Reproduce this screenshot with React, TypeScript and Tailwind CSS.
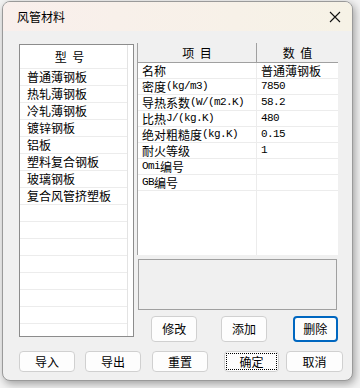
import React from "react";

const F = { fontFamily: '"Noto Sans CJK SC", "Noto Sans", sans-serif' };

function Mixed({ text }: { text: string }) {
  const parts = text.match(/[\x20-\x7e]+|[^\x20-\x7e]+/g) || [];
  return (
    <>
      {parts.map((p, i) =>
        /^[\x20-\x7e]+$/.test(p) ? (
          <span
            key={i}
            className="text-[11px] tracking-[-0.6px]"
            style={{ fontFamily: '"Liberation Mono", monospace' }}
          >
            {p}
          </span>
        ) : (
          <span key={i}>{p}</span>
        )
      )}
    </>
  );
}

const types = ["普通薄钢板", "热轧薄钢板", "冷轧薄钢板", "镀锌钢板", "铝板", "塑料复合钢板", "玻璃钢板", "复合风管挤塑板"];

const props: [string, string][] = [
  ["名称", "普通薄钢板"],
  ["密度(kg/m3)", "7850"],
  ["导热系数(W/(m2.K)", "58.2"],
  ["比热J/(kg.K)", "480"],
  ["绝对粗糙度(kg.K)", "0.15"],
  ["耐火等级", "1"],
  ["Omi编号", ""],
  ["GB编号", ""],
];

function Btn({ label, w, h, extra = "" }: { label: string; w: string; h: string; extra?: string }) {
  return (
    <div
      className={`${w} ${h} flex items-center justify-center rounded-[4px] bg-[#fdfdfd] text-[12px] text-black ${extra}`}
    >
      {label}
    </div>
  );
}

export default function App() {
  const emptyRows = Array.from({ length: 9 });
  return (
    <div className="w-[360px] h-[388px] bg-[#f3f3f3] relative overflow-hidden" style={F}>
      <div className="absolute left-[2px] top-[1px] w-[351px] h-[380px] rounded-[8px] border border-[#9a9a9a] bg-[#f0f0f0] shadow-[2px_3px_8px_rgba(0,0,0,0.35)] overflow-hidden flex flex-col">
        {/* title bar */}
        <div className="h-[29px] shrink-0 flex items-center justify-between bg-gradient-to-r from-[#f9efec] to-[#f6f2e6] pl-[14px] pr-[10px]">
          <span className="text-[12px] text-black">风管材料</span>
          <svg width="12" height="12" viewBox="0 0 12 12" className="mr-[1px]">
            <path d="M1 1 L11 11 M11 1 L1 11" stroke="#111" strokeWidth="1.1" />
          </svg>
        </div>
        {/* body */}
        <div className="flex flex-col pl-[16px] pt-[12px]">
          <div className="flex">
            {/* left list */}
            <div className="mt-[1px] w-[115px] h-[293px] border border-[#8c8c8c] bg-white overflow-hidden flex">
              <div className="w-[108px] border-r border-[#e3e3e3] flex flex-col">
                <div className="h-[24px] shrink-0 flex items-center justify-center text-[12px] border-b border-[#ececec] pr-[8px]">
                  型&nbsp;&nbsp;号
                </div>
                {types.map((t) => (
                  <div key={t} className="h-[17px] shrink-0 flex items-center pl-[7px] text-[12px] border-b border-[#ececec]">
                    {t}
                  </div>
                ))}
                {emptyRows.map((_, i) => (
                  <div key={i} className="h-[17px] shrink-0 border-b border-[#ececec]" />
                ))}
              </div>
            </div>
            {/* right column */}
            <div className="ml-[3px] w-[201px] flex flex-col">
              <div className="h-[267px] flex flex-col">
                <div className="h-[212px] border-l border-[#a0a0a0] bg-white flex flex-col">
                  <div className="h-[20px] shrink-0 flex bg-[#f0f0f0] border-b border-[#a0a0a0] text-[12px]">
                    <div className="w-[119px] flex items-center justify-center border-r border-[#a0a0a0]">项&nbsp;&nbsp;目</div>
                    <div className="flex-1 flex items-center justify-center">数&nbsp;&nbsp;值</div>
                  </div>
                  {props.map(([k, v]) => (
                    <div key={k} className="h-[16px] shrink-0 flex text-[12px] border-b border-[#ececec]">
                      <div className="w-[119px] pl-[4px] flex items-center border-r border-[#ececec] whitespace-nowrap">
                        <Mixed text={k} />
                      </div>
                      <div className="flex-1 pl-[4px] flex items-center whitespace-nowrap">
                        <Mixed text={v} />
                      </div>
                    </div>
                  ))}
                  <div className="flex-1 flex">
                    <div className="w-[119px] border-r border-[#ececec]" />
                  </div>
                </div>
                <div className="mt-[4px] ml-[1px] w-[199px] h-[51px] border border-[#a0a0a0] bg-[#f0f0f0]" />
              </div>
              <div className="mt-[6px] flex">
                <Btn label="修改" w="w-[47px]" h="h-[26px]" extra="ml-[14px] border border-[#d0d0d0]" />
                <Btn label="添加" w="w-[46px]" h="h-[26px]" extra="ml-[24px] border border-[#d0d0d0]" />
                <Btn label="删除" w="w-[46px]" h="h-[26px]" extra="ml-[26px] border-2 border-[#0067c0]" />
              </div>
            </div>
          </div>
          {/* bottom row */}
          <div className="mt-[9px] flex ml-[0px]">
            <Btn label="导入" w="w-[56px]" h="h-[21px]" extra="border border-[#d0d0d0]" />
            <Btn label="导出" w="w-[56px]" h="h-[21px]" extra="ml-[10px] border border-[#d0d0d0]" />
            <Btn label="重置" w="w-[56px]" h="h-[21px]" extra="ml-[11px] border border-[#d0d0d0]" />
            <div className="ml-[16px] w-[55px] h-[21px] rounded-[4px] bg-[#fdfdfd] border border-[#d0d0d0] p-[1px]">
              <div className="w-full h-full border border-dotted border-black flex items-center justify-center text-[12px]">确定</div>
            </div>
            <Btn label="取消" w="w-[57px]" h="h-[21px]" extra="ml-[7px] border border-[#d0d0d0]" />
          </div>
        </div>
      </div>
    </div>
  );
}
